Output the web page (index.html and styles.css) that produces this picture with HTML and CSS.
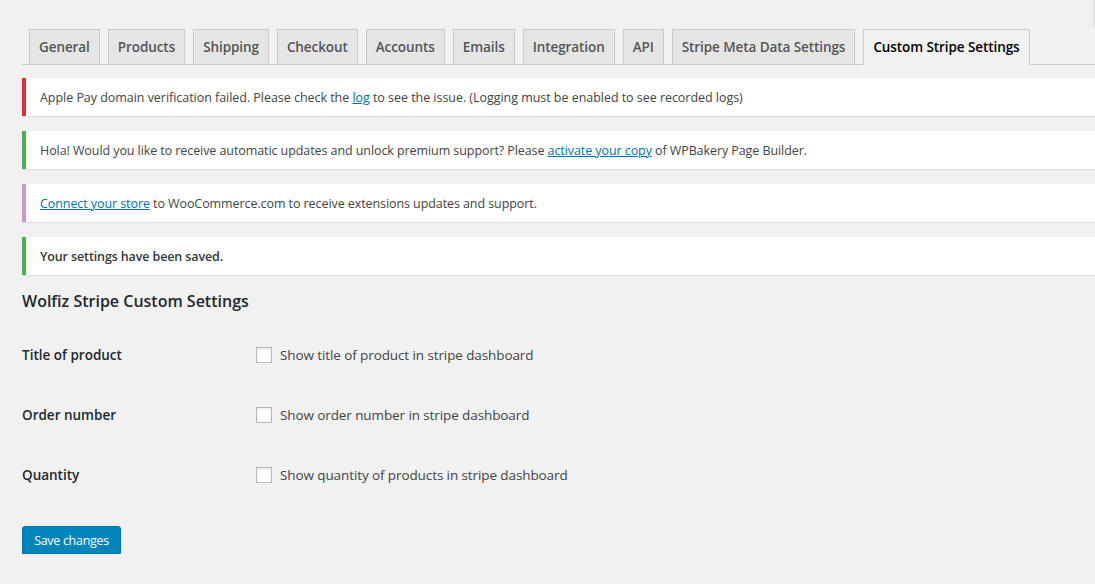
FILE: index.html
```html
<!DOCTYPE html>
<html>
<head>
<meta charset="utf-8">
<link rel="stylesheet" href="styles.css">
</head>
<body>
<div class="screen-edge"></div>
<div class="wrap">
  <nav class="tabs">
    <a class="tab">General</a>
    <a class="tab">Products</a>
    <a class="tab">Shipping</a>
    <a class="tab">Checkout</a>
    <a class="tab">Accounts</a>
    <a class="tab">Emails</a>
    <a class="tab">Integration</a>
    <a class="tab">API</a>
    <a class="tab">Stripe Meta Data Settings</a>
    <a class="tab active">Custom Stripe Settings</a>
  </nav>
  <div class="notice red"><p>Apple Pay domain verification failed. Please check the <a href="#">log</a> to see the issue. (Logging must be enabled to see recorded logs)</p></div>
  <div class="notice green"><p class="tight">Hola! Would you like to receive automatic updates and unlock premium support? Please <a href="#">activate your copy</a> of WPBakery Page Builder.</p></div>
  <div class="notice purple"><p class="tight"><a href="#">Connect your store</a> to WooCommerce.com to receive extensions updates and support.</p></div>
  <div class="notice green"><p class="strong">Your settings have been saved.</p></div>
  <h2 class="title">Wolfiz Stripe Custom Settings</h2>
  <div class="form">
    <div class="row"><div class="label">Title of product</div><label class="field"><span class="cb"></span>Show title of product in stripe dashboard</label></div>
    <div class="row"><div class="label">Order number</div><label class="field"><span class="cb"></span>Show order number in stripe dashboard</label></div>
    <div class="row"><div class="label">Quantity</div><label class="field"><span class="cb"></span>Show quantity of products in stripe dashboard</label></div>
  </div>
  <button class="btn">Save changes</button>
</div>
</body>
</html>
```
FILE: styles.css
```css
html, body {
  margin: 0;
  padding: 0;
  background: #f1f1f1;
  color: #23282d;
  font-family: "Open Sans", "Noto Sans", sans-serif;
  font-size: 13px;
  overflow: hidden;
}
.screen-edge {
  position: absolute;
  top: 0;
  right: 1px;
  width: 1px;
  height: 28px;
  background: #dcdcdc;
}
.wrap {
  padding: 29px 0 0 22px;
}
.tabs {
  display: flex;
  gap: 8px;
  padding-left: 7px;
  border-bottom: 1px solid #ccc;
  height: 35px;
}
.tab {
  display: block;
  box-sizing: border-box;
  height: 36px;
  padding: 0 9px;
  border: 1px solid #ccc;
  background: #e5e5e5;
  color: #555;
  font-size: 13.5px;
  font-weight: 600;
  line-height: 34px;
  letter-spacing: -0.08px;
  white-space: nowrap;
}
.tab.active {
  background: #f1f1f1;
  color: #000;
  border-bottom-color: #f1f1f1;
}
.notice {
  background: #fff;
  border-left: 4px solid #fff;
  box-shadow: 0 1px 1px rgba(0,0,0,0.08);
  height: 38px;
  display: flex;
  align-items: center;
  padding-left: 14px;
  margin-top: 13px;
}
.notice.red { border-left-color: #dc3232; }
.notice.green { border-left-color: #46b450; }
.notice.purple { border-left-color: #cc99c2; }
.notice + .notice { margin-top: 15px; }
.notice p {
  margin: 0;
  color: #444;
  font-size: 12.5px;
  letter-spacing: -0.04px;
  white-space: nowrap;
}
.notice p.tight { letter-spacing: -0.08px; }
.notice p.strong { font-weight: 600; color: #32373c; letter-spacing: -0.12px; }
.notice a { color: #0073aa; text-decoration: underline; }
.title {
  margin: 15px 0 0 0;
  font-size: 16px;
  font-weight: 600;
  color: #23282d;
  height: 22px;
  line-height: 22px;
}
.form {
  margin-top: 32px;
  display: flex;
  flex-direction: column;
  gap: 38px;
}
.row {
  display: flex;
  align-items: center;
  height: 22px;
}
.label {
  width: 234px;
  font-size: 13.5px;
  font-weight: 600;
  color: #23282d;
}
.field {
  display: flex;
  align-items: center;
  font-size: 13.5px;
  letter-spacing: -0.1px;
  color: #444;
}
.cb {
  display: inline-block;
  box-sizing: border-box;
  width: 16px;
  height: 16px;
  border: 1px solid #b4b9be;
  background: #fff;
  box-shadow: inset 0 1px 2px rgba(0,0,0,0.1);
  margin-right: 8px;
}
.btn {
  display: block;
  margin-top: 40px;
  box-sizing: border-box;
  width: 99px;
  height: 28px;
  background: #0085ba;
  border: 1px solid #0073aa;
  border-radius: 3px;
  box-shadow: 0 1px 0 #006799;
  color: #fff;
  font-family: "Open Sans", "Noto Sans", sans-serif;
  font-size: 12.5px;
  letter-spacing: -0.3px;
  padding: 0;
}
```
